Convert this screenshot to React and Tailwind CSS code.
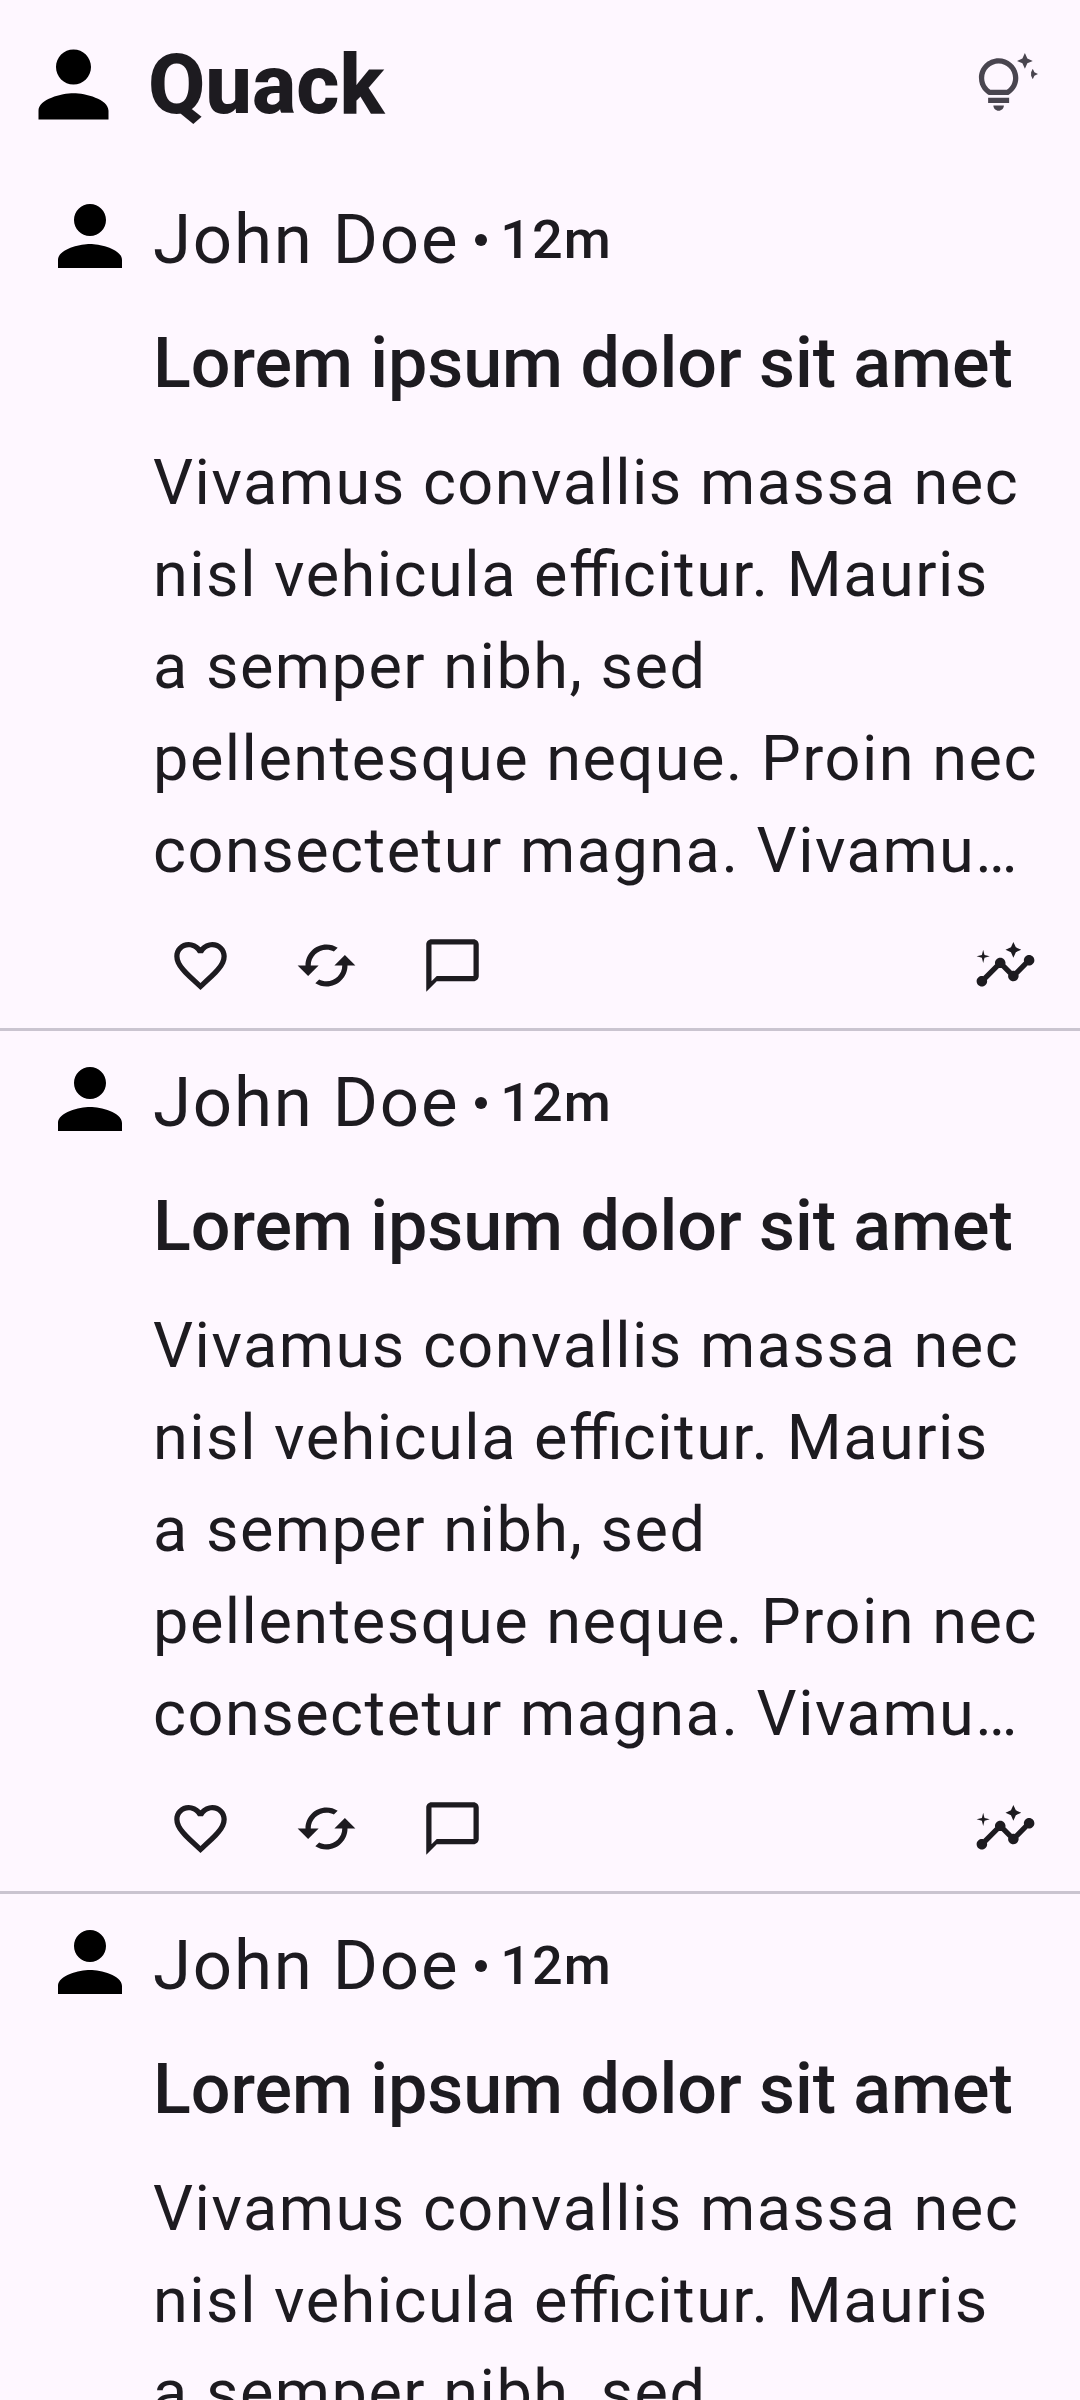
import React from 'react';

const Icon = ({ d, className }) => (
  <svg viewBox="0 0 24 24" fill="currentColor" className={className}>
    <path d={d} />
  </svg>
);

const person = 'M12 12c2.21 0 4-1.79 4-4s-1.79-4-4-4-4 1.79-4 4 1.79 4 4 4zm0 2c-2.67 0-8 1.34-8 4v2h16v-2c0-2.66-5.33-4-8-4z';
const heart = 'M16.5 3c-1.74 0-3.41.81-4.5 2.09C10.91 3.81 9.24 3 7.5 3 4.42 3 2 5.42 2 8.5c0 3.78 3.4 6.86 8.55 11.54L12 21.35l1.45-1.32C18.6 15.36 22 12.28 22 8.5 22 5.42 19.58 3 16.5 3zm-4.4 15.55l-.1.1-.1-.1C7.14 14.24 4 11.39 4 8.5 4 6.5 5.5 5 7.5 5c1.54 0 3.04.99 3.57 2.36h1.87C13.46 5.99 14.96 5 16.5 5c2 0 3.5 1.5 3.5 3.5 0 2.89-3.14 5.74-7.9 10.05z';
const cached = 'M19 8l-4 4h3c0 3.31-2.69 6-6 6-1.01 0-1.97-.25-2.8-.7l-1.46 1.46C8.97 19.54 10.43 20 12 20c4.42 0 8-3.58 8-8h3l-4-4zM6 12c0-3.31 2.69-6 6-6 1.01 0 1.97.25 2.8.7l1.46-1.46C15.03 4.46 13.57 4 12 4c-4.42 0-8 3.58-8 8H1l4 4 4-4H6z';
const comment = 'M20 2H4c-1.1 0-2 .9-2 2v18l4-4h14c1.1 0 2-.9 2-2V4c0-1.1-.9-2-2-2zm0 14H6l-2 2V4h16v12z';
const insights = 'M21 8c-1.45 0-2.26 1.44-1.93 2.51l-3.55 3.56c-.3-.09-.74-.09-1.04 0l-2.55-2.55C12.27 10.45 11.46 9 10 9c-1.45 0-2.27 1.44-1.93 2.52l-4.56 4.55C2.44 15.74 1 16.55 1 18c0 1.1.9 2 2 2 1.45 0 2.26-1.44 1.93-2.51l4.55-4.56c.3.09.74.09 1.04 0l2.55 2.55C12.73 16.55 13.54 18 15 18c1.45 0 2.27-1.44 1.93-2.52l3.56-3.55c1.07.33 2.51-.48 2.51-1.93 0-1.1-.9-2-2-2zM15 9l.94-2.07L18 6l-2.06-.93L15 3l-.92 2.07L12 6l2.08.93zM3.5 11L4 9l2-.5L4 8l-.5-2L3 8l-2 .5L3 9z';
const tips = 'M7 20h4c0 1.1-.9 2-2 2s-2-.9-2-2zm-2-1h8v-2H5v2zm11.5-9.5c0 3.82-2.66 5.86-3.77 6.5H5.27c-1.11-.64-3.77-2.68-3.77-6.5C1.5 5.36 4.86 2 9 2s7.5 3.36 7.5 7.5zm-2 0C14.5 6.47 12.03 4 9 4S3.5 6.47 3.5 9.5c0 2.47 1.49 3.89 2.35 4.5h6.3c.86-.61 2.35-2.03 2.35-4.5zm6.87-2.13L20 8l1.37-.63L22 6l.63 1.37L24 8l-1.37.63L22 10l-.63-1.37zM19 6l.94-2.06L22 3l-2.06-.94L19 0l-.94 2.06L16 3l2.06.94L19 6z';

function Post() {
  return (
    <div className="flex h-[863px] shrink-0 flex-col border-b-[3px] border-[#cac4d0] pl-[42px] pr-[41px] pt-[20px]">
      <div className="flex">
        <Icon d={person} className="h-[96px] w-[96px] shrink-0 text-black" />
        <div className="ml-[15px] min-w-0 flex-1">
          <div className="mt-[6px] flex h-[92px] items-center">
            <span className="text-[69px] leading-[92px] tracking-[1.8px]">John Doe</span>
            <span className="ml-[16px] h-[12px] w-[12px] rounded-full bg-[#1d1b20]" />
            <span className="ml-[13px] text-[54px] font-medium leading-[92px] tracking-[1px]">12m</span>
          </div>
          <div className="mt-[35px] whitespace-nowrap text-[70px] font-medium leading-[84px] tracking-[-0.05px]">Lorem ipsum dolor sit amet</div>
          <p className="mt-[32px] line-clamp-5 text-[63px] leading-[92px] tracking-[1.5px]">
            Vivamus convallis massa nec nisl vehicula e<span className="tracking-normal">ffi</span>citur. Mauris a semper nibh, sed
            pellentesque neque. Proin nec consectetur magna. Vivamus ullamcorper nulla at lacus.
          </p>
        </div>
      </div>
      <div className="mr-[2px] mt-[37px] flex items-center pl-[127px]">
        <Icon d={heart} className="h-[63px] w-[63px]" />
        <Icon d={cached} className="ml-[63px] h-[63px] w-[63px]" />
        <Icon d={comment} className="ml-[63px] h-[63px] w-[63px]" />
        <Icon d={insights} className="ml-auto h-[63px] w-[63px]" />
      </div>
    </div>
  );
}

export default function App() {
  return (
    <div className="h-[2400px] w-[1080px] overflow-hidden bg-[#fef7ff] font-['Roboto',sans-serif] text-[#1d1b20]">
      <div className="flex h-[168px] items-center pl-[21px] pr-[42px]">
        <Icon d={person} className="h-[105px] w-[105px] text-black" />
        <span className="ml-[22px] text-[83px] font-extrabold leading-none">Quack</span>
        <Icon d={tips} className="ml-auto h-[63px] w-[63px] text-[#49454f]" />
      </div>
      <Post />
      <Post />
      <Post />
    </div>
  );
}
